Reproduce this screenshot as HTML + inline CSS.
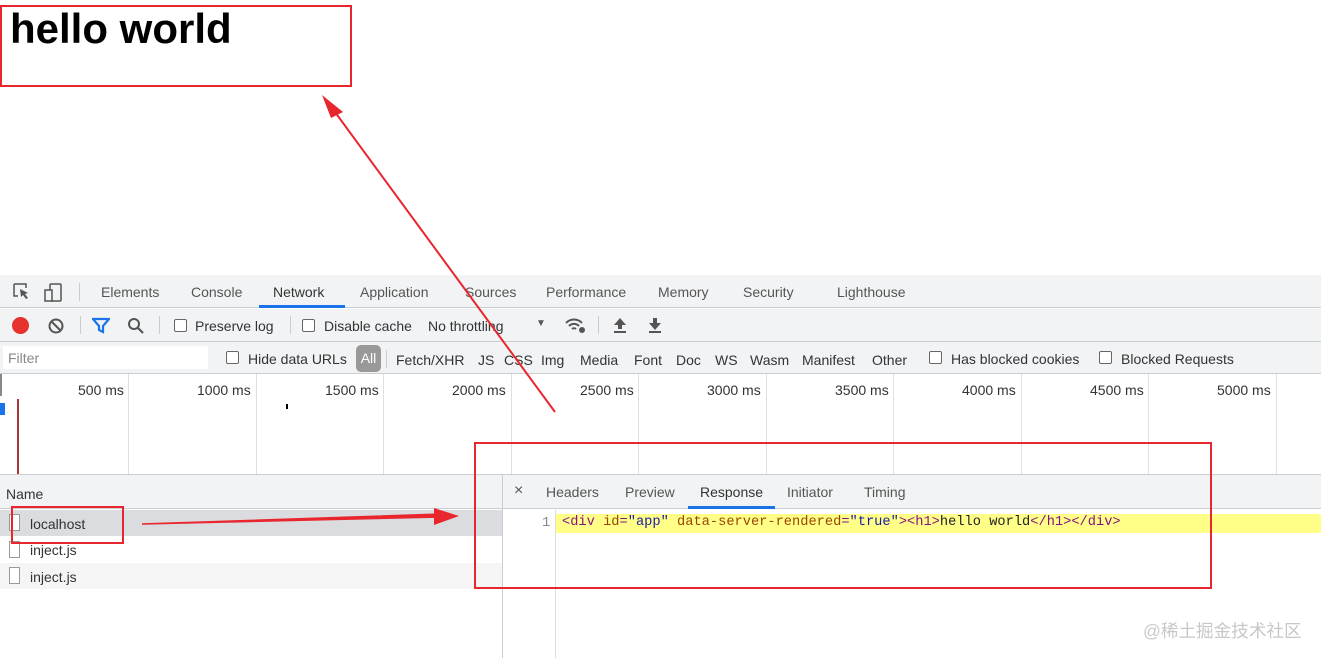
<!DOCTYPE html>
<html><head><meta charset="utf-8"><style>
*{margin:0;padding:0;box-sizing:border-box}
body{width:1321px;height:658px;overflow:hidden;background:#fff;font-family:"Liberation Sans","Noto Sans CJK SC",sans-serif;position:relative;color:#333}
.a{position:absolute;white-space:nowrap}
.t{font-size:14px;color:#555}
.cb{position:absolute;width:13px;height:13px;border:1px solid #666;border-radius:2px;background:#fff}
.g{position:absolute;top:374px;height:100px;width:1px;background:#e0e0e0}
.ms{position:absolute;top:382px;font-size:14px;color:#333}
.mono{font-family:"Liberation Mono",monospace;font-size:13.7px}
</style></head><body>
<div class="a" style="left:10px;top:5px;font-size:42px;font-weight:bold;color:#000">hello world</div>

<div class="a" style="left:0;top:275px;width:1321px;height:33px;background:#f1f3f4;border-bottom:1px solid #cacdd1"></div>
<svg class="a" style="left:12px;top:282px" width="55" height="20" viewBox="0 0 55 20"><path d="M2 2h12v4M2 2v12h4" fill="none" stroke="#555" stroke-width="1.5"/><path d="M8 7l8 4-3 1 3 4-2 1-3-4-2 2z" fill="#555"/><rect x="38" y="2" width="11" height="17" rx="1" fill="none" stroke="#555" stroke-width="1.5"/><rect x="33" y="8" width="7" height="11" fill="#f1f3f4" stroke="#555" stroke-width="1.5"/></svg>
<div class="a" style="left:79px;top:283px;width:1px;height:18px;background:#ccc"></div>
<div class="a t" style="left:101px;top:284px">Elements</div>
<div class="a t" style="left:191px;top:284px">Console</div>
<div class="a t" style="left:273px;top:284px;color:#333">Network</div>
<div class="a" style="left:259px;top:305px;width:86px;height:3px;background:#1a73e8"></div>
<div class="a t" style="left:360px;top:284px">Application</div>
<div class="a t" style="left:465px;top:284px">Sources</div>
<div class="a t" style="left:546px;top:284px">Performance</div>
<div class="a t" style="left:658px;top:284px">Memory</div>
<div class="a t" style="left:743px;top:284px">Security</div>
<div class="a t" style="left:837px;top:284px">Lighthouse</div>

<div class="a" style="left:0;top:309px;width:1321px;height:33px;background:#f1f3f4;border-bottom:1px solid #cacdd1"></div>
<div class="a" style="left:12px;top:317px;width:17px;height:17px;border-radius:50%;background:#e8322d"></div>
<svg class="a" style="left:47px;top:317px" width="18" height="18"><circle cx="9" cy="9" r="6.5" fill="none" stroke="#555" stroke-width="2"/><path d="M4.5 4.5l9 9" stroke="#555" stroke-width="2"/></svg>
<div class="a" style="left:80px;top:316px;width:1px;height:18px;background:#ccc"></div>
<svg class="a" style="left:92px;top:317px" width="18" height="17"><path d="M1 2h16l-6 7v6l-4-2v-4z" fill="none" stroke="#1a73e8" stroke-width="2.2"/></svg>
<svg class="a" style="left:127px;top:317px" width="18" height="18"><circle cx="7" cy="7" r="5" fill="none" stroke="#555" stroke-width="2"/><path d="M11 11l5 5" stroke="#555" stroke-width="2.2"/></svg>
<div class="a" style="left:159px;top:316px;width:1px;height:18px;background:#ccc"></div>
<div class="cb" style="left:174px;top:319px"></div>
<div class="a t" style="left:195px;top:318px;color:#333">Preserve log</div>
<div class="a" style="left:290px;top:316px;width:1px;height:18px;background:#ccc"></div>
<div class="cb" style="left:302px;top:319px"></div>
<div class="a t" style="left:324px;top:318px;color:#333">Disable cache</div>
<div class="a t" style="left:428px;top:318px;color:#333">No throttling</div>
<div class="a" style="left:536px;top:318px;font-size:10px;color:#555">▼</div>
<svg class="a" style="left:564px;top:316px" width="24" height="18"><path d="M2 7a11 11 0 0 1 16 0M5 10a7 7 0 0 1 10 0M8 13a3 3 0 0 1 4 0" fill="none" stroke="#555" stroke-width="2"/><circle cx="18" cy="14" r="3" fill="#555"/></svg>
<div class="a" style="left:598px;top:316px;width:1px;height:18px;background:#ccc"></div>
<svg class="a" style="left:612px;top:317px" width="16" height="17"><path d="M8 1l6 7h-4v4H6V8H2z M2 14h12v2H2z" fill="#555"/></svg>
<svg class="a" style="left:647px;top:317px" width="16" height="17"><path d="M6 1h4v5h4l-6 7-6-7h4z M2 14h12v2H2z" fill="#555"/></svg>

<div class="a" style="left:0;top:342px;width:1321px;height:32px;background:#f1f3f4;border-bottom:1px solid #cacdd1"></div>
<div class="a" style="left:3px;top:346px;width:205px;height:23px;background:#fff"></div>
<div class="a t" style="left:8px;top:350px;color:#888">Filter</div>
<div class="cb" style="left:226px;top:351px"></div>
<div class="a t" style="left:248px;top:351px;color:#333">Hide data URLs</div>
<div class="a" style="left:356px;top:345px;width:25px;height:27px;background:#999;border-radius:5px;color:#fff;font-size:14px;text-align:center;line-height:27px">All</div>
<div class="a" style="left:386px;top:350px;width:1px;height:18px;background:#ccc"></div>
<div class="a t" style="left:396px;top:352px;color:#333">Fetch/XHR</div>
<div class="a t" style="left:478px;top:352px;color:#333">JS</div>
<div class="a t" style="left:504px;top:352px;color:#333">CSS</div>
<div class="a t" style="left:541px;top:352px;color:#333">Img</div>
<div class="a t" style="left:580px;top:352px;color:#333">Media</div>
<div class="a t" style="left:634px;top:352px;color:#333">Font</div>
<div class="a t" style="left:676px;top:352px;color:#333">Doc</div>
<div class="a t" style="left:715px;top:352px;color:#333">WS</div>
<div class="a t" style="left:750px;top:352px;color:#333">Wasm</div>
<div class="a t" style="left:802px;top:352px;color:#333">Manifest</div>
<div class="a t" style="left:872px;top:352px;color:#333">Other</div>
<div class="cb" style="left:929px;top:351px"></div>
<div class="a t" style="left:951px;top:351px;color:#333">Has blocked cookies</div>
<div class="cb" style="left:1099px;top:351px"></div>
<div class="a t" style="left:1121px;top:351px;color:#333">Blocked Requests</div>

<div class="g" style="left:128px"></div><div class="g" style="left:256px"></div><div class="g" style="left:383px"></div><div class="g" style="left:511px"></div><div class="g" style="left:638px"></div><div class="g" style="left:766px"></div><div class="g" style="left:893px"></div><div class="g" style="left:1021px"></div><div class="g" style="left:1148px"></div><div class="g" style="left:1276px"></div>
<div class="a" style="left:0;top:374px;width:2px;height:22px;background:#888"></div>
<div class="a" style="left:0;top:403px;width:5px;height:12px;background:#1a73e8"></div>
<div class="a" style="left:17px;top:399px;width:2px;height:75px;background:#a33"></div>
<div class="a" style="left:286px;top:404px;width:2px;height:5px;background:#000"></div>
<div class="ms" style="left:78px">500 ms</div><div class="ms" style="left:197px">1000 ms</div><div class="ms" style="left:325px">1500 ms</div><div class="ms" style="left:452px">2000 ms</div><div class="ms" style="left:580px">2500 ms</div><div class="ms" style="left:707px">3000 ms</div><div class="ms" style="left:835px">3500 ms</div><div class="ms" style="left:962px">4000 ms</div><div class="ms" style="left:1090px">4500 ms</div><div class="ms" style="left:1217px">5000 ms</div>

<div class="a" style="left:0;top:474px;width:1321px;height:1px;background:#cacdd1"></div>
<div class="a" style="left:0;top:475px;width:502px;height:34px;background:#f1f3f4;border-bottom:1px solid #cacdd1"></div>
<div class="a t" style="left:6px;top:486px;color:#333">Name</div>
<div class="a" style="left:0;top:510px;width:502px;height:26px;background:#dadce0"></div>
<div class="a" style="left:0;top:563px;width:502px;height:26px;background:#f5f5f5"></div>
<div class="a" style="left:9px;top:514px;width:11px;height:17px;border:1px solid #999;background:#fff"></div>
<div class="a" style="left:9px;top:541px;width:11px;height:17px;border:1px solid #999;background:#fff"></div>
<div class="a" style="left:9px;top:567px;width:11px;height:17px;border:1px solid #999;background:#fff"></div>
<div class="a t" style="left:30px;top:516px;color:#333">localhost</div>
<div class="a t" style="left:30px;top:542px;color:#333">inject.js</div>
<div class="a t" style="left:30px;top:569px;color:#333">inject.js</div>
<div class="a" style="left:502px;top:475px;width:1px;height:183px;background:#cacdd1"></div>
<div class="a" style="left:503px;top:475px;width:818px;height:34px;background:#f1f3f4;border-bottom:1px solid #cacdd1"></div>
<div class="a" style="left:514px;top:482px;font-size:16px;color:#555">×</div>
<div class="a t" style="left:546px;top:484px">Headers</div>
<div class="a t" style="left:625px;top:484px">Preview</div>
<div class="a t" style="left:700px;top:484px;color:#333">Response</div>
<div class="a" style="left:688px;top:506px;width:87px;height:3px;background:#1a73e8"></div>
<div class="a t" style="left:787px;top:484px">Initiator</div>
<div class="a t" style="left:864px;top:484px">Timing</div>
<div class="a" style="left:555px;top:510px;width:1px;height:148px;background:#ddd"></div>
<div class="a mono" style="left:542px;top:516px;color:#888">1</div>
<div class="a mono" style="left:556px;top:514px;width:765px;height:19px;background:#ffff88;padding:1px 0 0 6px;color:#881280"><span>&lt;div</span> <span style="color:#994500">id</span>=<span style="color:#1a1aa6">"app"</span> <span style="color:#994500">data-server-rendered</span>=<span style="color:#1a1aa6">"true"</span>&gt;&lt;h1&gt;<span style="color:#222">hello world</span>&lt;/h1&gt;&lt;/div&gt;</div>
<div class="a" style="left:1143px;top:618px;font-size:17.6px;color:#c8c8c8">@稀土掘金技术社区</div>

<svg class="a" style="left:0;top:0" width="1321" height="658">
<g fill="none" stroke="#e8262d" stroke-width="2"><rect x="1" y="6" width="350" height="80"/><rect x="475" y="443" width="736" height="145"/><rect x="12" y="507" width="111" height="36"/><line x1="555" y1="412" x2="332" y2="108"/></g>
<polygon points="322,95 343,112 331,118" fill="#e8262d"/>
<polygon points="142,524 440,514 440,517" fill="#e8262d" stroke="#e8262d" stroke-width="1.5"/>
<polygon points="459,516 434,508 434,525" fill="#e8262d"/>
</svg>
</body></html>
